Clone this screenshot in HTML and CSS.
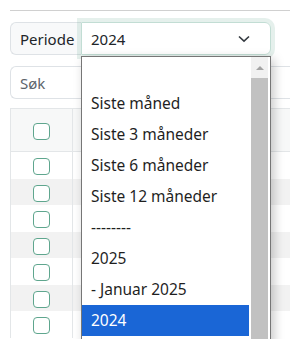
FILE: index.html
```html
<!DOCTYPE html>
<html lang="no">

<head>
    <meta charset="UTF-8">
    <meta name="viewport" content="width=device-width, initial-scale=1.0">
    <title>Periode</title>
    <link rel="stylesheet" href="styles.css">
</head>

<body>
    <div class="page">
        <hr class="rule">

        <div class="filter">
            <span class="filter-label">Periode</span>
            <div class="filter-select">
                <span>2024</span>
                <svg class="chevron" width="12" height="8" viewBox="0 0 12 8">
                    <path d="M1 1.5 L6 6.2 L11 1.5" fill="none" stroke="#343a40" stroke-width="1.6" />
                </svg>
            </div>

            <!-- open dropdown of the select -->
            <div class="options">
                <ul class="option-list">
                    <li></li>
                    <li>Siste måned</li>
                    <li>Siste 3 måneder</li>
                    <li>Siste 6 måneder</li>
                    <li>Siste 12 måneder</li>
                    <li>--------</li>
                    <li>2025</li>
                    <li>- Januar 2025</li>
                    <li class="selected">2024</li>
                </ul>
                <div class="scrollbar">
                    <div class="scroll-up"></div>
                    <div class="scroll-thumb"></div>
                </div>
            </div>
        </div>

        <input class="search" type="text" placeholder="Søk">

        <table class="grid">
            <thead>
                <tr>
                    <th><span class="check"></span></th>
                    <th></th>
                </tr>
            </thead>
            <tbody>
                <tr><td><span class="check"></span></td><td></td></tr>
                <tr><td><span class="check"></span></td><td></td></tr>
                <tr><td><span class="check"></span></td><td></td></tr>
                <tr><td><span class="check"></span></td><td></td></tr>
                <tr><td><span class="check"></span></td><td></td></tr>
                <tr><td><span class="check"></span></td><td></td></tr>
                <tr><td><span class="check"></span></td><td></td></tr>
            </tbody>
        </table>
    </div>
</body>

</html>
```

FILE: styles.css
```css
html,
body {
    margin: 0;
    padding: 0;
    background: #fff;
    font-family: "Noto Sans", "Open Sans", sans-serif;
    font-size: 15px;
    color: #212529;
    overflow: hidden;
}

.page {
    box-sizing: border-box;
    width: 290px;
    height: 339px;
    padding: 10px 0 0 10px;
    overflow: hidden;
}

.rule {
    margin: 0;
    border: none;
    border-top: 1px solid #d0d0d0;
}

.filter {
    position: relative;
    display: flex;
    width: 261px;
    height: 33px;
    margin-top: 11px;
}

.filter-label {
    display: flex;
    align-items: center;
    box-sizing: border-box;
    width: 71px;
    padding-left: 9px;
    background-color: #f8f9fa;
    border: 1px solid #dee2e6;
    border-right: none;
    border-radius: 6px 0 0 6px;
}

.filter-select {
    display: flex;
    align-items: center;
    justify-content: space-between;
    box-sizing: border-box;
    flex: 1;
    padding: 0 20px 0 9px;
    border: 1px solid #c2ddd4;
    border-radius: 0 6px 6px 0;
    box-shadow: 0 0 0 4px rgba(110, 170, 150, 0.18);
}

.chevron {
    display: block;
}

.options {
    position: absolute;
    top: 34px;
    left: 71px;
    width: 190px;
    height: 290px;
    box-sizing: border-box;
    display: flex;
    background: #fff;
    border: 1px solid #767676;
    border-bottom: none;
    box-shadow: 3px 3px 10px rgba(0, 0, 0, 0.22);
    z-index: 2;
}

.option-list {
    list-style: none;
    margin: 0;
    padding: 0;
    width: 167px;
    font-size: 15.5px;
}

.option-list li {
    height: 31px;
    line-height: 31px;
    padding-left: 9px;
    white-space: nowrap;
    color: #1f1f1f;
}

.option-list li.selected {
    background-color: #1a66d6;
    color: #fff;
}

.scrollbar {
    width: 17px;
    margin: 0 2px;
    background: #f1f1f1;
    display: flex;
    flex-direction: column;
}

.scroll-up {
    height: 21px;
    display: flex;
    justify-content: center;
    align-items: center;
}

.scroll-up::before {
    content: "";
    border-left: 4px solid transparent;
    border-right: 4px solid transparent;
    border-bottom: 4px solid #a3a3a3;
}

.scroll-thumb {
    flex: 1;
    background: #c1c1c1;
}

.search {
    display: block;
    box-sizing: border-box;
    width: 280px;
    height: 33px;
    margin-top: 11px;
    padding: 0 9px;
    border: 1px solid #dee2e6;
    border-right: none;
    border-radius: 6px 0 0 6px;
    font-family: inherit;
    font-size: 15px;
    color: #212529;
}

.search::placeholder {
    color: #5c636a;
}

.grid {
    margin-top: 9px;
    width: 280px;
    border-collapse: collapse;
}

.grid th,
.grid td {
    border: 1px solid #e3e6e8;
    padding: 0;
    text-align: center;
    vertical-align: middle;
}

.grid th:first-child,
.grid td:first-child {
    width: 61px;
}

.grid th:last-child,
.grid td:last-child {
    border-right: none;
}

.grid thead tr {
    height: 43px;
    background-color: #f7f8f8;
}

.grid tbody tr {
    height: 27px;
}

.grid tbody tr:nth-child(even) {
    height: 26px;
    background-color: #f2f2f2;
}

.grid tbody td {
    border-top: none;
    border-bottom: none;
}

.check {
    display: inline-block;
    box-sizing: border-box;
    width: 17px;
    height: 17px;
    vertical-align: middle;
    border: 1px solid #5fa68e;
    border-radius: 4px;
    background: #fff;
}
```
